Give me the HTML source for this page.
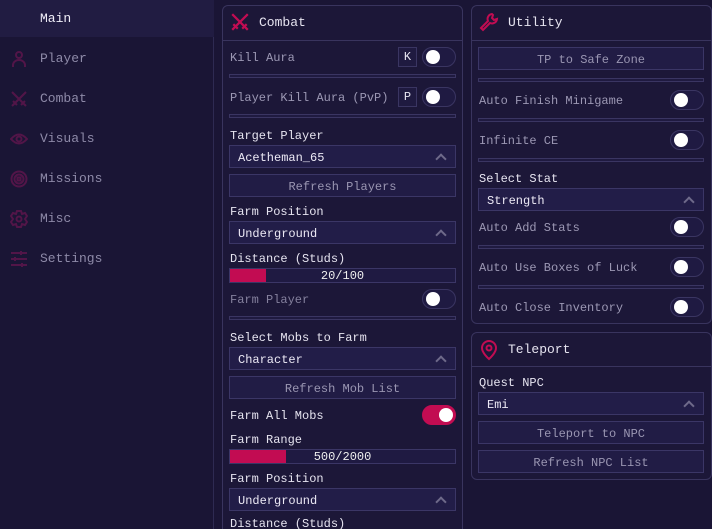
<!DOCTYPE html>
<html><head><meta charset="utf-8"><style>
*{margin:0;padding:0;box-sizing:border-box}
html{overflow:hidden;width:712px;height:529px}
body{width:712px;height:529px;overflow:hidden;background:#1a1535;font-family:"Liberation Mono","DejaVu Sans Mono",monospace;font-size:12px;color:#e6e4f0;position:relative}
.a{position:absolute}
.side{left:0;top:0;width:214px;height:529px;background:#1a1535;border-right:1px solid #2e2a52}
.nav{left:40px;font-size:13px;color:#8e8aa8;line-height:16px}
.ic{left:10px;width:18px;height:18px}
.panel{background:#1c1738;border:1px solid #39345e;border-radius:6px}
.sep{height:1px;background:#39345e}
.t{line-height:16px;white-space:nowrap}
.lab{color:#9c98b4}
.track{height:4px;border:1px solid #3a3562;background:#1f1a40}
.dd{height:23px;background:#221d48;border:1px solid #3b3666;padding-left:8px;line-height:24px;color:#ece9f5}
.dd:after{content:"";position:absolute;right:10px;top:9px;width:6px;height:6px;border-left:2px solid #6e6a8a;border-top:2px solid #6e6a8a;transform:rotate(45deg)}
.btn{height:23px;background:#211c45;border:1px solid #3b3666;text-align:center;line-height:24px;color:#9a96b2}
.tg{width:34px;height:20px;border-radius:10px;background:#1f1a42;border:1px solid #3a3562}
.tg:after{content:"";position:absolute;left:3px;top:2px;width:14px;height:14px;border-radius:50%;background:#fff}
.tg.on{background:#c20c52;border-color:#c20c52}
.tg.on:after{left:16px}
.key{width:19px;height:20px;border:1px solid #3a3562;background:#1f1a40;text-align:center;line-height:19px;color:#e6e4f0}
.sl{height:15px;background:#1f1a42;border:1px solid #3b3666;text-align:center;line-height:14px;color:#eee;font-size:12px}
.fill{position:absolute;left:0;top:0;bottom:0;background:#c20c52}
.sl span{position:relative}
</style></head><body>
<div class="a side"></div>
<div class="a" style="left:0;top:0;width:214px;height:37px;background:#211c42"></div>
<div class="a nav" style="top:11px;color:#f0eef8">Main</div>
<div class="a nav" style="top:51px">Player</div>
<div class="a nav" style="top:91px">Combat</div>
<div class="a nav" style="top:131px">Visuals</div>
<div class="a nav" style="top:171px">Missions</div>
<div class="a nav" style="top:211px">Misc</div>
<div class="a nav" style="top:251px">Settings</div>
<svg class="a ic" style="top:50px" viewBox="0 0 18 18" fill="none" stroke="#521548" stroke-width="2"><circle cx="9" cy="5" r="3"/><path d="M3 17v-2a6 5 0 0 1 12 0v2"/></svg>
<svg class="a ic" style="top:90px" viewBox="0 0 18 18" fill="none" stroke="#521548" stroke-width="2"><path d="M2 2l10 10M16 2L6 12M2 16l4-4M16 16l-4-4M3 11l4 4M15 11l-4 4"/></svg>
<svg class="a ic" style="top:130px" viewBox="0 0 18 18" fill="none" stroke="#521548" stroke-width="2"><path d="M1 9q8-9 16 0q-8 9-16 0z"/><circle cx="9" cy="9" r="2.5"/></svg>
<svg class="a ic" style="top:170px" viewBox="0 0 18 18" fill="none" stroke="#521548" stroke-width="2"><circle cx="9" cy="9" r="7.5"/><circle cx="9" cy="9" r="4.5"/><rect x="7.5" y="7.5" width="3" height="3"/></svg>
<svg class="a ic" style="top:210px" viewBox="0 0 18 18" fill="none" stroke="#521548" stroke-width="2"><path d="M7 1h4l1 3 3-1 2 3-2 3 2 3-2 3-3-1-1 3H7l-1-3-3 1-2-3 2-3-2-3 2-3 3 1z"/><circle cx="9" cy="9" r="2.5"/></svg>
<svg class="a ic" style="top:250px" viewBox="0 0 18 18" fill="none" stroke="#521548" stroke-width="2"><path d="M1 3h16M1 9h16M1 15h16M11 1v4M5 7v4M12 13v4"/></svg>

<!-- Combat panel -->
<div class="a panel" style="left:222px;top:5px;width:241px;height:530px"></div>
<svg class="a" style="left:230px;top:12px" width="20" height="20" viewBox="0 0 18 18" fill="none" stroke="#c20c52" stroke-width="2"><path d="M2 2l10 10M16 2L6 12M2 16l4-4M16 16l-4-4M3 11l4 4M15 11l-4 4"/></svg>
<div class="a t" style="left:259px;top:15px;font-size:13px">Combat</div>
<div class="a sep" style="left:223px;top:40px;width:239px"></div>
<div class="a t lab" style="left:230px;top:50px">Kill Aura</div>
<div class="a key" style="left:398px;top:47px">K</div>
<div class="a tg" style="left:422px;top:47px"></div>
<div class="a track" style="left:229px;top:74px;width:227px"></div>
<div class="a t lab" style="left:230px;top:90px">Player Kill Aura (PvP)</div>
<div class="a key" style="left:398px;top:87px">P</div>
<div class="a tg" style="left:422px;top:87px"></div>
<div class="a track" style="left:229px;top:114px;width:227px"></div>
<div class="a t" style="left:230px;top:128px">Target Player</div>
<div class="a dd" style="left:229px;top:145px;width:227px">Acetheman_65</div>
<div class="a btn" style="left:229px;top:174px;width:227px">Refresh Players</div>
<div class="a t" style="left:230px;top:204px">Farm Position</div>
<div class="a dd" style="left:229px;top:221px;width:227px">Underground</div>
<div class="a t" style="left:230px;top:251px">Distance (Studs)</div>
<div class="a sl" style="left:229px;top:268px;width:227px"><div class="fill" style="width:36px"></div><span>20/100</span></div>
<div class="a t" style="left:230px;top:292px;color:#85819e">Farm Player</div>
<div class="a tg" style="left:422px;top:289px"></div>
<div class="a track" style="left:229px;top:316px;width:227px"></div>
<div class="a t" style="left:230px;top:330px">Select Mobs to Farm</div>
<div class="a dd" style="left:229px;top:347px;width:227px">Character</div>
<div class="a btn" style="left:229px;top:376px;width:227px">Refresh Mob List</div>
<div class="a t" style="left:230px;top:408px">Farm All Mobs</div>
<div class="a tg on" style="left:422px;top:405px"></div>
<div class="a t" style="left:230px;top:432px">Farm Range</div>
<div class="a sl" style="left:229px;top:449px;width:227px"><div class="fill" style="width:56px"></div><span>500/2000</span></div>
<div class="a t" style="left:230px;top:471px">Farm Position</div>
<div class="a dd" style="left:229px;top:488px;width:227px">Underground</div>
<div class="a t" style="left:230px;top:516px">Distance (Studs)</div>

<!-- Utility -->
<div class="a panel" style="left:471px;top:5px;width:241px;height:319px"></div>
<svg class="a" style="left:479px;top:12px" width="20" height="20" viewBox="0 0 20 20" fill="none" stroke="#c20c52" stroke-width="2"><path d="M13 2a5 5 0 0 0-4 7l-7 7 2 2 7-7a5 5 0 0 0 7-4l-3 1-2-2 1-3z"/></svg>
<div class="a t" style="left:508px;top:15px;font-size:13px">Utility</div>
<div class="a sep" style="left:472px;top:40px;width:239px"></div>
<div class="a btn" style="left:478px;top:47px;width:226px">TP to Safe Zone</div>
<div class="a track" style="left:478px;top:78px;width:226px"></div>
<div class="a t lab" style="left:479px;top:93px">Auto Finish Minigame</div>
<div class="a tg" style="left:670px;top:90px"></div>
<div class="a track" style="left:478px;top:118px;width:226px"></div>
<div class="a t lab" style="left:479px;top:133px">Infinite CE</div>
<div class="a tg" style="left:670px;top:130px"></div>
<div class="a track" style="left:478px;top:158px;width:226px"></div>
<div class="a t" style="left:479px;top:171px">Select Stat</div>
<div class="a dd" style="left:478px;top:188px;width:226px">Strength</div>
<div class="a t lab" style="left:479px;top:220px">Auto Add Stats</div>
<div class="a tg" style="left:670px;top:217px"></div>
<div class="a track" style="left:478px;top:245px;width:226px"></div>
<div class="a t lab" style="left:479px;top:260px">Auto Use Boxes of Luck</div>
<div class="a tg" style="left:670px;top:257px"></div>
<div class="a track" style="left:478px;top:285px;width:226px"></div>
<div class="a t lab" style="left:479px;top:300px">Auto Close Inventory</div>
<div class="a tg" style="left:670px;top:297px"></div>

<!-- Teleport -->
<div class="a panel" style="left:471px;top:332px;width:241px;height:148px"></div>
<svg class="a" style="left:479px;top:339px" width="20" height="22" viewBox="0 0 20 22" fill="none" stroke="#c20c52" stroke-width="2"><path d="M10 20s-7-6-7-11a7 7 0 0 1 14 0c0 5-7 11-7 11z"/><circle cx="10" cy="9" r="2.5"/></svg>
<div class="a t" style="left:508px;top:342px;font-size:13px">Teleport</div>
<div class="a sep" style="left:472px;top:366px;width:239px"></div>
<div class="a t" style="left:479px;top:375px">Quest NPC</div>
<div class="a dd" style="left:478px;top:392px;width:226px">Emi</div>
<div class="a btn" style="left:478px;top:421px;width:226px">Teleport to NPC</div>
<div class="a btn" style="left:478px;top:450px;width:226px">Refresh NPC List</div>
</body></html>
